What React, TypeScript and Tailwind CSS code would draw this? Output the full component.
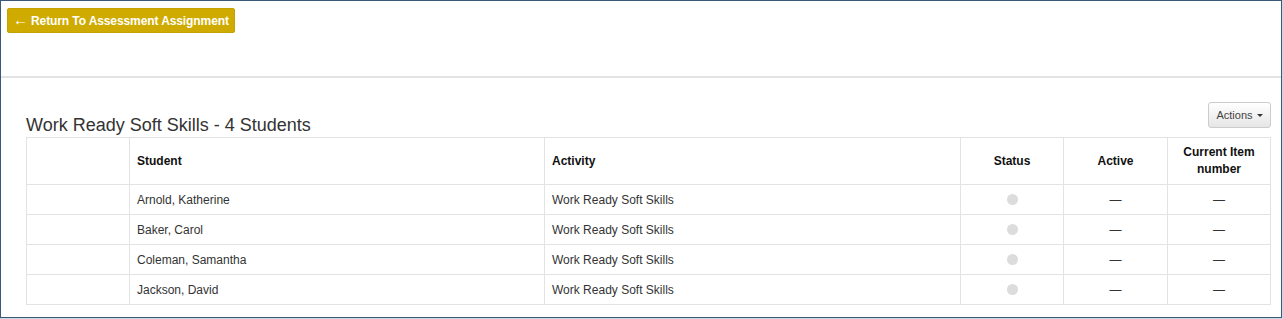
import React from 'react';

interface StudentRow {
  name: string;
  activity: string;
}

const rows: StudentRow[] = [
  { name: 'Arnold, Katherine', activity: 'Work Ready Soft Skills' },
  { name: 'Baker, Carol', activity: 'Work Ready Soft Skills' },
  { name: 'Coleman, Samantha', activity: 'Work Ready Soft Skills' },
  { name: 'Jackson, David', activity: 'Work Ready Soft Skills' },
];

const App: React.FC = () => {
  return (
    <div
      className="w-[1283px] h-[319px] bg-[#c9d9e6] pr-px pb-px"
      style={{ fontFamily: '"Liberation Sans", Arial, sans-serif' }}
    >
      <div className="h-full border border-[#3a5878] bg-white flex flex-col">
        <div className="h-[77px] border-b-2 border-[#e3e3e3] pl-[6px] pt-[7px]">
          <button className="h-[25px] pl-[5px] pr-[5px] bg-[#cfab00] border border-[#c4a200] rounded-[2px] text-white text-[12px] font-bold flex items-center gap-[3px]">
            <span className="text-[15px] leading-none -mt-[2px]">←</span>
            <span className="tracking-[-0.1px]">Return To Assessment Assignment</span>
          </button>
        </div>

        <div className="pl-[25px] pr-[10px] pt-[24px]">
          <div className="flex items-end justify-between">
            <h2 className="text-[18px] text-[#333] leading-[20px] mb-[2px]">Work Ready Soft Skills - 4 Students</h2>
            <button className="h-[26px] w-[63px] mb-[9px] border border-[#ccc] rounded-[3px] bg-gradient-to-b from-white to-[#e6e6e6] text-[11px] text-[#444] flex items-center justify-center gap-[4px]">
              Actions
              <span className="w-0 h-0 border-l-[3px] border-r-[3px] border-t-[3px] border-l-transparent border-r-transparent border-t-[#333]" />
            </button>
          </div>

          <table className="w-[1244px] border-collapse text-[12px] text-[#333] table-fixed">
            <colgroup>
              <col className="w-[103px]" />
              <col className="w-[415px]" />
              <col className="w-[416px]" />
              <col className="w-[103px]" />
              <col className="w-[104px]" />
              <col className="w-[103px]" />
            </colgroup>
            <thead>
              <tr className="h-[47px] font-bold text-[#111]">
                <th className="border border-[#e3e3e3]" />
                <th className="border border-[#e3e3e3] text-left px-[7px]">Student</th>
                <th className="border border-[#e3e3e3] text-left px-[7px]">Activity</th>
                <th className="border border-[#e3e3e3] text-center">Status</th>
                <th className="border border-[#e3e3e3] text-center">Active</th>
                <th className="border border-[#e3e3e3] text-center leading-[17px] px-[8px]">Current Item number</th>
              </tr>
            </thead>
            <tbody>
              {rows.map((r) => (
                <tr key={r.name} className="h-[30px]">
                  <td className="border border-[#e3e3e3]" />
                  <td className="border border-[#e3e3e3] px-[7px]">{r.name}</td>
                  <td className="border border-[#e3e3e3] px-[7px]">{r.activity}</td>
                  <td className="border border-[#e3e3e3]">
                    <div className="mx-auto w-[11px] h-[11px] rounded-full bg-[#dcdcdc]" />
                  </td>
                  <td className="border border-[#e3e3e3] text-center">—</td>
                  <td className="border border-[#e3e3e3] text-center">—</td>
                </tr>
              ))}
            </tbody>
          </table>
        </div>
      </div>
    </div>
  );
};

export default App;
